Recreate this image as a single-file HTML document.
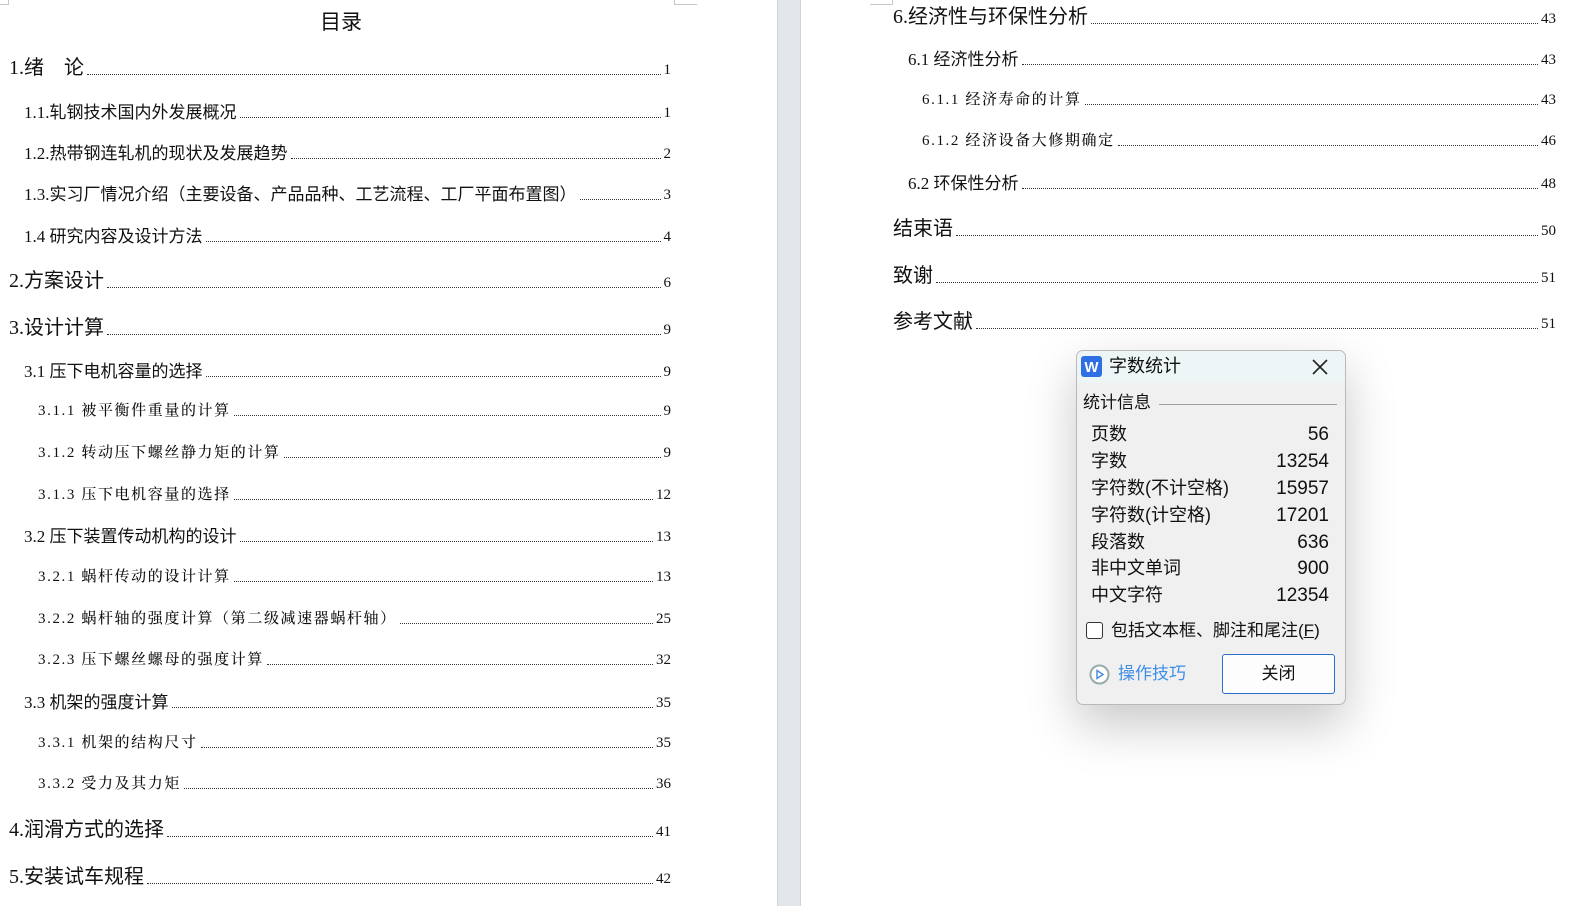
<!DOCTYPE html>
<html><head><meta charset="utf-8">
<style>
html,body{margin:0;padding:0;width:1578px;height:906px;overflow:hidden;background:#fff;}
body{position:relative;font-family:"Liberation Serif","Noto Sans CJK SC",serif;color:#111;}
.row{position:absolute;display:flex;align-items:flex-end;white-space:nowrap;line-height:1;}
.row .t{flex:none;}
.row .d{flex:1;border-bottom:1px dotted #333;margin:0 3px 3px 3px;height:1px;}
.row .n{flex:none;font-family:"Liberation Serif",serif;}
.h1{font-size:20px;font-family:"Liberation Serif","Noto Sans CJK SC",sans-serif;}
.h2{font-size:17px;font-family:"Liberation Serif","Noto Sans CJK SC",sans-serif;}
.h3{font-size:15px;font-family:"Liberation Serif","Noto Serif CJK SC",serif;letter-spacing:1.6px;font-weight:500;}
.h1 .n,.h2 .n,.h3 .n{font-size:15px;letter-spacing:0;font-weight:normal;}
.gap{position:absolute;left:777px;top:0;width:22px;height:906px;background:#e3e7ea;border-left:1px solid #d0d4d7;border-right:1px solid #d0d4d7;}
.crop{position:absolute;border-color:#c8c8c8;border-style:solid;width:22px;height:4px;}
.dlg{position:absolute;left:1076px;top:350px;width:268px;height:353px;background:#f0f0f0;border:1px solid #b9b9b9;border-radius:7px;box-shadow:0 20px 50px rgba(0,0,0,0.22);font-family:"Liberation Sans","Noto Sans CJK SC",sans-serif;overflow:hidden;}
.tb{height:32px;background:#eef5f6;position:relative;}
.dl{position:absolute;font-size:18px;color:#111;line-height:1;}
.dv{position:absolute;right:16px;font-size:19px;line-height:1;}
</style></head><body>

<div class="gap"></div>
<div class="crop" style="left:0;top:0;border-width:0 1px 1px 0;width:8px;"></div>
<div class="crop" style="left:674px;top:0;border-width:0 0 1px 1px;"></div>
<div class="crop" style="left:870px;top:0;border-width:0 1px 1px 0;"></div>

<div style="position:absolute;left:320px;top:6px;font-size:21px;font-family:'Liberation Sans','Noto Sans CJK SC',sans-serif;">目录</div>

<!-- left page -->
<div class="row h1" style="left:9px;width:662px;top:58px;"><span class="t">1.绪　论</span><span class="d"></span><span class="n">1</span></div>
<div class="row h2" style="left:24px;width:647px;top:104px;"><span class="t">1.1.轧钢技术国内外发展概况</span><span class="d"></span><span class="n">1</span></div>
<div class="row h2" style="left:24px;width:647px;top:145px;"><span class="t">1.2.热带钢连轧机的现状及发展趋势</span><span class="d"></span><span class="n">2</span></div>
<div class="row h2" style="left:24px;width:647px;top:186px;"><span class="t">1.3.实习厂情况介绍（主要设备、产品品种、工艺流程、工厂平面布置图）</span><span class="d"></span><span class="n">3</span></div>
<div class="row h2" style="left:24px;width:647px;top:228px;"><span class="t">1.4 研究内容及设计方法</span><span class="d"></span><span class="n">4</span></div>
<div class="row h1" style="left:9px;width:662px;top:271px;"><span class="t">2.方案设计</span><span class="d"></span><span class="n">6</span></div>
<div class="row h1" style="left:9px;width:662px;top:318px;"><span class="t">3.设计计算</span><span class="d"></span><span class="n">9</span></div>
<div class="row h2" style="left:24px;width:647px;top:363px;"><span class="t">3.1 压下电机容量的选择</span><span class="d"></span><span class="n">9</span></div>
<div class="row h3" style="left:38px;width:633px;top:404px;"><span class="t">3.1.1 被平衡件重量的计算</span><span class="d"></span><span class="n">9</span></div>
<div class="row h3" style="left:38px;width:633px;top:446px;"><span class="t">3.1.2 转动压下螺丝静力矩的计算</span><span class="d"></span><span class="n">9</span></div>
<div class="row h3" style="left:38px;width:633px;top:488px;"><span class="t">3.1.3 压下电机容量的选择</span><span class="d"></span><span class="n">12</span></div>
<div class="row h2" style="left:24px;width:647px;top:528px;"><span class="t">3.2 压下装置传动机构的设计</span><span class="d"></span><span class="n">13</span></div>
<div class="row h3" style="left:38px;width:633px;top:570px;"><span class="t">3.2.1 蜗杆传动的设计计算</span><span class="d"></span><span class="n">13</span></div>
<div class="row h3" style="left:38px;width:633px;top:612px;"><span class="t">3.2.2 蜗杆轴的强度计算（第二级减速器蜗杆轴）</span><span class="d"></span><span class="n">25</span></div>
<div class="row h3" style="left:38px;width:633px;top:653px;"><span class="t">3.2.3 压下螺丝螺母的强度计算</span><span class="d"></span><span class="n">32</span></div>
<div class="row h2" style="left:24px;width:647px;top:694px;"><span class="t">3.3 机架的强度计算</span><span class="d"></span><span class="n">35</span></div>
<div class="row h3" style="left:38px;width:633px;top:736px;"><span class="t">3.3.1 机架的结构尺寸</span><span class="d"></span><span class="n">35</span></div>
<div class="row h3" style="left:38px;width:633px;top:777px;"><span class="t">3.3.2 受力及其力矩</span><span class="d"></span><span class="n">36</span></div>
<div class="row h1" style="left:9px;width:662px;top:820px;"><span class="t">4.润滑方式的选择</span><span class="d"></span><span class="n">41</span></div>
<div class="row h1" style="left:9px;width:662px;top:867px;"><span class="t">5.安装试车规程</span><span class="d"></span><span class="n">42</span></div>

<!-- right page -->
<div class="row h1" style="left:893px;width:663px;top:7px;"><span class="t">6.经济性与环保性分析</span><span class="d"></span><span class="n">43</span></div>
<div class="row h2" style="left:908px;width:648px;top:51px;"><span class="t">6.1 经济性分析</span><span class="d"></span><span class="n">43</span></div>
<div class="row h3" style="left:922px;width:634px;top:93px;"><span class="t">6.1.1 经济寿命的计算</span><span class="d"></span><span class="n">43</span></div>
<div class="row h3" style="left:922px;width:634px;top:134px;"><span class="t">6.1.2 经济设备大修期确定</span><span class="d"></span><span class="n">46</span></div>
<div class="row h2" style="left:908px;width:648px;top:175px;"><span class="t">6.2 环保性分析</span><span class="d"></span><span class="n">48</span></div>
<div class="row h1" style="left:893px;width:663px;top:219px;"><span class="t">结束语</span><span class="d"></span><span class="n">50</span></div>
<div class="row h1" style="left:893px;width:663px;top:266px;"><span class="t">致谢</span><span class="d"></span><span class="n">51</span></div>
<div class="row h1" style="left:893px;width:663px;top:312px;"><span class="t">参考文献</span><span class="d"></span><span class="n">51</span></div>

<!-- dialog -->
<div class="dlg">
  <div class="tb">
    <svg style="position:absolute;left:4px;top:5px" width="21" height="21" viewBox="0 0 21 21"><rect width="21" height="21" rx="3" fill="#2f6fe4"/><text x="10.5" y="16" text-anchor="middle" font-family="Liberation Sans" font-weight="bold" font-size="15" fill="#fff">W</text></svg>
    <div style="position:absolute;left:32px;top:6px;font-size:18px;line-height:1.1;">字数统计</div>
    <svg style="position:absolute;left:235px;top:8px" width="16" height="16" viewBox="0 0 16 16"><path d="M1 1L15 15M15 1L1 15" stroke="#222" stroke-width="1.6"/></svg>
  </div>
  <div style="position:absolute;left:6px;top:43px;font-size:17px;line-height:1.1;">统计信息</div>
  <div style="position:absolute;left:82px;top:53px;width:178px;border-top:1px solid #a0a0a0;"></div>
  <div class="dl" style="left:14px;top:74px;">页数</div><div class="dv" style="top:74px;">56</div>
  <div class="dl" style="left:14px;top:101px;">字数</div><div class="dv" style="top:101px;">13254</div>
  <div class="dl" style="left:14px;top:128px;">字符数(不计空格)</div><div class="dv" style="top:128px;">15957</div>
  <div class="dl" style="left:14px;top:155px;">字符数(计空格)</div><div class="dv" style="top:155px;">17201</div>
  <div class="dl" style="left:14px;top:182px;">段落数</div><div class="dv" style="top:182px;">636</div>
  <div class="dl" style="left:14px;top:208px;">非中文单词</div><div class="dv" style="top:208px;">900</div>
  <div class="dl" style="left:14px;top:235px;">中文字符</div><div class="dv" style="top:235px;">12354</div>
  <div style="position:absolute;left:9px;top:271px;width:17px;height:17px;border:1px solid #333;border-radius:3px;background:#fff;box-sizing:border-box;"></div>
  <div style="position:absolute;left:34px;top:271px;font-size:17px;line-height:1;">包括文本框、脚注和尾注(<u>F</u>)</div>
  <svg style="position:absolute;left:12px;top:313px" width="21" height="21" viewBox="0 0 21 21"><circle cx="10.5" cy="10.5" r="9" fill="#fff" stroke="#9aa" stroke-width="2"/><path d="M8 6.5L14 10.5L8 14.5Z" fill="none" stroke="#4a90e2" stroke-width="1.5"/></svg>
  <div style="position:absolute;left:41px;top:314px;font-size:17px;color:#3e8ee8;line-height:1;">操作技巧</div>
  <div style="position:absolute;left:145px;top:303px;width:113px;height:40px;border:1px solid #2a6fc9;border-radius:3px;background:#fdfdfd;box-sizing:border-box;text-align:center;line-height:38px;font-size:17px;">关闭</div>
</div>
</body></html>
